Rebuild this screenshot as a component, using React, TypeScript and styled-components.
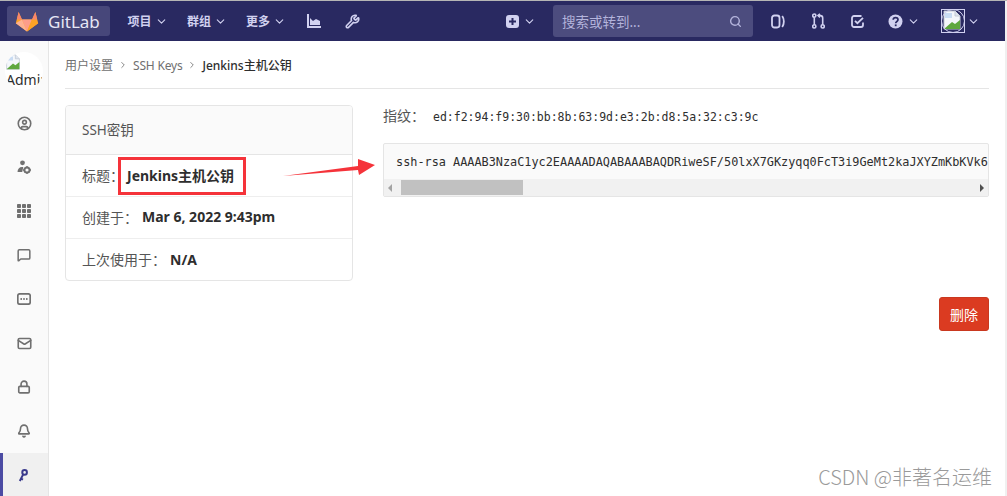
import styled, { createGlobalStyle } from 'styled-components';
import {
  ChevronDown,
  ChevronRight,
  Search,
  Wrench,
  CircleUser,
  MessageSquare,
  Mail,
  Lock,
  Bell,
} from 'lucide-react';

const GlobalStyle = createGlobalStyle`
  html, body { margin: 0; padding: 0; background: #fff; }
  body {
    font-family: "Noto Sans", "Noto Sans CJK SC", "Liberation Sans", sans-serif;
    font-size: 14px;
    color: #2e2e2e;
    overflow: hidden;
  }
`;

const Page = styled.div`
  position: relative;
  width: 1007px;
  height: 496px;
  overflow: hidden;
  border-top: 1px solid #b5b5b5;
  box-sizing: border-box;
`;

const Navbar = styled.header`
  height: 40px;
  background: #292961;
  display: flex;
  align-items: center;
  padding-left: 7px;
  color: #d1d1f0;
`;

const Brand = styled.div`
  width: 103px;
  height: 30px;
  box-sizing: border-box;
  background: #47477a;
  border-radius: 3px;
  display: flex;
  align-items: center;
  gap: 9px;
  padding-left: 8px;
  color: #e6e6f5;
  font-size: 17px;
  margin-right: 7px;
`;

const NavItem = styled.div<{ $w: number }>`
  width: ${(p) => p.$w}px;
  display: flex;
  align-items: center;
  justify-content: center;
  gap: 3px;
  font-size: 12px;
  font-weight: 700;
  color: #d1d1f0;
`;

const SearchBox = styled.div`
  width: 200px;
  height: 32px;
  box-sizing: border-box;
  background: #4c4c7e;
  border-radius: 3px;
  display: flex;
  align-items: center;
  justify-content: space-between;
  padding: 0 11px 0 9px;
  margin: 0 5px 0 12px;
  font-size: 13.5px;
  color: #b4b4dc;
`;

const NavIcon = styled.div<{ $w: number; $ml?: number }>`
  width: ${(p) => p.$w}px;
  margin-left: ${(p) => p.$ml ?? 0}px;
  display: flex;
  align-items: center;
  justify-content: center;
  gap: 4px;
  color: #d1d1f0;
`;

const Avatar = styled.div`
  position: relative;
  width: 24px;
  height: 24px;
  flex: none;
  margin-right: -2px;
  border: 1px solid #d1d1f0;
  box-sizing: border-box;
  display: flex;
  &::after {
    content: '';
    position: absolute;
    inset: -1px;
    border: 1px solid #d1d1f0;
    border-radius: 50%;
  }
`;

const Body = styled.div`
  display: flex;
  height: 455px;
`;

const Sidebar = styled.aside`
  width: 49px;
  flex: none;
  background: #fafafa;
  border-right: 1px solid #e5e5e5;
  box-sizing: border-box;
  display: flex;
  flex-direction: column;
  align-items: stretch;
`;

const SideHead = styled.div`
  height: 60px;
  flex: none;
  padding: 11px 0 0 5px;
  box-sizing: border-box;
`;

const SideAvatar = styled.div`
  width: 38px;
  height: 38px;
  border-radius: 50%;
  background: #fff;
  overflow: hidden;
  padding-top: 2px;
  box-sizing: border-box;
  font-size: 14px;
  line-height: 14px;
  color: #2e2e2e;
  white-space: nowrap;
  & > svg {
    display: block;
    margin-bottom: 3px;
  }
  & > div {
    padding-left: 1px;
  }
`;

const SideItem = styled.div<{ $active?: boolean }>`
  height: 44px;
  flex: none;
  display: flex;
  align-items: center;
  justify-content: center;
  color: ${(p) => (p.$active ? '#292961' : '#707070')};
  background: ${(p) => (p.$active ? '#f0f0f0' : 'transparent')};
  box-shadow: ${(p) => (p.$active ? 'inset 3px 0 0 #4b4ba3' : 'none')};
`;

const Main = styled.main`
  flex: 1;
  padding: 0 18px 0 16px;
  min-width: 0;
  display: flex;
  flex-direction: column;
`;

const Breadcrumb = styled.nav`
  height: 46px;
  padding-top: 1px;
  flex: none;
  border-bottom: 1px solid #e5e5e5;
  display: flex;
  align-items: center;
  gap: 5px;
  font-size: 12px;
  color: #707070;
`;

const Crumb = styled.span<{ $current?: boolean; $tight?: boolean }>`
  color: ${(p) => (p.$current ? '#2e2e2e' : '#707070')};
  font-weight: ${(p) => (p.$current ? 500 : 400)};
  letter-spacing: ${(p) => (p.$tight ? '-0.2px' : '0')};
`;

const Columns = styled.div`
  display: flex;
  gap: 30px;
  margin-top: 16px;
`;

const Card = styled.section`
  width: 288px;
  height: 176px;
  flex: none;
  box-sizing: border-box;
  border: 1px solid #e5e5e5;
  border-radius: 4px;
  overflow: hidden;
`;

const CardHeader = styled.div`
  height: 49px;
  padding: 0 0 3px 16px;
  box-sizing: border-box;
  background: #fafafa;
  border-bottom: 1px solid #e5e5e5;
  display: flex;
  align-items: center;
  font-size: 13.5px;
  color: #555;
`;

const CardRow = styled.div<{ $gap: number }>`
  height: 42px;
  box-sizing: border-box;
  padding: 0 0 2px 16px;
  border-bottom: 1px solid #eee;
  display: flex;
  align-items: center;
  gap: ${(p) => p.$gap}px;
  color: #555;
  &:last-child {
    border-bottom: none;
  }
  & > strong {
    color: #2e2e2e;
    font-weight: 700;
  }
`;

const Detail = styled.div`
  width: 606px;
  flex: none;
`;

const Fingerprint = styled.div`
  display: flex;
  align-items: center;
  gap: 8px;
  height: 22px;
  padding-bottom: 2px;
  box-sizing: border-box;
  color: #555;
  & > code {
    margin-top: 4px;
    font-family: "DejaVu Sans Mono", monospace;
    font-size: 11.5px;
    color: #2e2e2e;
  }
`;

const CodeBlock = styled.div`
  margin-top: 16px;
  height: 54px;
  box-sizing: border-box;
  border: 1px solid #e5e5e5;
  border-radius: 2px;
  background: #fafafa;
  overflow: hidden;
`;

const CodeText = styled.pre`
  margin: 0;
  height: 35px;
  padding: 0 0 0 12px;
  overflow: hidden;
  font-family: "DejaVu Sans Mono", monospace;
  font-size: 11.85px;
  line-height: 37px;
  color: #2e2e2e;
`;

const ScrollBar = styled.div`
  height: 17px;
  background: #f1f1f1;
  display: flex;
  align-items: center;
  justify-content: space-between;
  padding: 0 4px;
  position: relative;
`;

const Thumb = styled.div`
  position: absolute;
  left: 17px;
  top: 0;
  width: 122px;
  height: 15px;
  margin-top: 1px;
  background: #c1c1c1;
`;

const Arrow = styled.div<{ $dir: 'l' | 'r' }>`
  width: 0;
  height: 0;
  border-top: 4px solid transparent;
  border-bottom: 4px solid transparent;
  ${(p) => (p.$dir === 'l' ? 'border-right: 4px solid #a3a3a3;' : 'border-left: 4px solid #505050;')}
`;

const Actions = styled.div`
  display: flex;
  justify-content: flex-end;
  margin-top: 100px;
`;

const DeleteButton = styled.button`
  width: 50px;
  height: 34px;
  background: #db3b21;
  border: 1px solid #c9381f;
  border-radius: 3px;
  color: #fff;
  font-family: inherit;
  font-size: 14px;
  padding: 0;
`;

const RedBox = styled.div`
  position: absolute;
  left: 118px;
  top: 156px;
  width: 128px;
  height: 38px;
  box-sizing: border-box;
  border: 3px solid #f5333a;
`;

const RedArrow = styled.svg`
  position: absolute;
  left: 282px;
  top: 157px;
`;

const Watermark = styled.div`
  position: absolute;
  right: 15px;
  bottom: 5px;
  font-family: "Noto Sans CJK SC", "Liberation Sans", sans-serif;
  font-size: 20px;
  font-weight: 300;
  color: #9a9a9a;
`;

const EdgeStrip = styled.div`
  position: absolute;
  right: 0;
  top: 0;
  bottom: 0;
  width: 2px;
  background: #f0f0f0;
`;

const BrokenImage = ({ size = 20 }: { size?: number }) => (
  <svg width={size} height={size} viewBox="0 0 20 20" style={{ flex: 'none' }}>
    <path d="M2 1h11l5 5v13H2z" fill="#f4f7fb" stroke="#c3cad6" strokeWidth="1" />
    <path d="M13 1v5h5" fill="#dfe5ee" stroke="#c3cad6" />
    <path d="M2 19l8-7 3 2 5-4v9z" fill="#5fa83f" />
    <path d="M3 3h7v5H3z" fill="#c9dcf3" />
  </svg>
);

const Logo = () => (
  <svg width="24" height="23" viewBox="0 0 24 22">
    <path d="M12 21L0.8 12.8 3.6 1.5 7 9h10l3.4-7.5 2.8 11.3z" fill="#fca326" />
    <path d="M12 21L7 9h10z" fill="#fc9d8a" />
    <path d="M12 21L0.8 12.8 7 9z" fill="#fdb193" />
    <path d="M12 21l11.2-8.2L17 9z" fill="#fca326" />
    <path d="M3.6 1.5L7 9H1.9z" fill="#f8856d" />
    <path d="M20.4 1.5L17 9h5.1z" fill="#f8856d" />
  </svg>
);

const ChartIcon = () => (
  <svg width="14" height="14" viewBox="0 0 14 14" fill="currentColor">
    <path d="M0 0h2v12h12v2H0z" />
    <path d="M3 11V4l3 3 3-2 4 2v4z" />
  </svg>
);

const PlusBox = () => (
  <svg width="13" height="13" viewBox="0 0 13 13">
    <rect width="13" height="13" rx="3" fill="currentColor" />
    <path d="M6.5 3v7M3 6.5h7" stroke="#292961" strokeWidth="2" />
  </svg>
);

const IssuesIcon = () => (
  <svg width="14" height="15" viewBox="0 0 14 15" fill="none" stroke="currentColor" strokeWidth="1.8">
    <rect x="1" y="1.5" width="7.5" height="12" rx="2.4" />
    <path d="M11.2 2c2.2 3 2.2 8 0 11" />
  </svg>
);

const MergeIcon = () => (
  <svg width="13" height="16" viewBox="0 0 13 16" fill="none" stroke="currentColor" strokeWidth="1.6">
    <circle cx="2.3" cy="2.6" r="1.6" />
    <circle cx="2.3" cy="13.4" r="1.6" />
    <circle cx="10.7" cy="13.4" r="1.6" />
    <path d="M2.3 4.2v7.6M10.7 11.8V5c0-1.5-1-2.4-2.4-2.4H6.5" />
    <path d="M8 .8L6 2.6l2 1.8" />
  </svg>
);

const TodoIcon = () => (
  <svg width="13" height="13" viewBox="0 0 13 13" fill="none" stroke="currentColor" strokeWidth="1.8">
    <path d="M12 7.5V10a2 2 0 0 1-2 2H3a2 2 0 0 1-2-2V3a2 2 0 0 1 2-2h7.5" />
    <path d="M4 5.8l2.4 2.4L12 2.8" />
  </svg>
);

const HelpIcon = () => (
  <svg width="15" height="15" viewBox="0 0 15 15">
    <circle cx="7.5" cy="7.5" r="7" fill="currentColor" />
    <path d="M5.2 5.8c0-3 4.8-3 4.8 0 0 1.8-2.3 1.6-2.3 3.4" fill="none" stroke="#292961" strokeWidth="1.7" />
    <rect x="6.8" y="10.4" width="1.8" height="1.8" fill="#292961" />
  </svg>
);

const AdminIcon = () => (
  <svg width="14" height="14" viewBox="0 0 14 14" fill="currentColor">
    <circle cx="5.5" cy="2.8" r="2.4" />
    <path d="M0.5 12c0-3 1.8-5 4.5-5 .8 0 1.3.2 1.3.2L5.2 12z" />
    <circle cx="10" cy="10" r="2.6" fill="none" stroke="currentColor" strokeWidth="2" />
    <path d="M10 6v1.5M10 12.5V14M6 10h1.5M12.5 10H14" stroke="currentColor" strokeWidth="1.4" />
  </svg>
);

const GridIcon = () => (
  <svg width="14" height="14" viewBox="0 0 14 14" fill="currentColor">
    {[0, 5, 10].flatMap((y) =>
      [0, 5, 10].map((x) => <rect key={`${x}-${y}`} x={x} y={y} width="4" height="4" rx="0.8" />),
    )}
  </svg>
);

const CommentDots = () => (
  <svg width="14" height="12" viewBox="0 0 14 12" fill="none" stroke="currentColor" strokeWidth="1.7">
    <rect x="0.8" y="0.8" width="12.4" height="10.4" rx="2" />
    <path d="M3.5 6h1.4M6.3 6h1.4M9.1 6h1.4" strokeWidth="1.8" />
  </svg>
);

const KeyIcon = () => (
  <svg width="10" height="13" viewBox="0 0 10 13" fill="none" stroke="#3a3a8c" strokeWidth="2" style={{ marginRight: 3 }}>
    <circle cx="6.6" cy="3.4" r="2.3" />
    <path d="M5.2 5.4L1.8 12M3 9.6l2 1" />
  </svg>
);

export default function App() {
  return (
    <>
      <GlobalStyle />
      <Page>
        <Navbar>
          <Brand>
            <Logo />
            GitLab
          </Brand>
          <NavItem $w={61}>
            项目
            <ChevronDown size={13} />
          </NavItem>
          <NavItem $w={58}>
            群组
            <ChevronDown size={13} />
          </NavItem>
          <NavItem $w={60}>
            更多
            <ChevronDown size={13} />
          </NavItem>
          <NavIcon $w={36}>
            <ChartIcon />
          </NavIcon>
          <NavIcon $w={40}>
            <Wrench size={15} strokeWidth={2.6} />
          </NavIcon>
          <NavIcon $w={40} $ml={129}>
            <PlusBox />
            <ChevronDown size={13} />
          </NavIcon>
          <SearchBox>
            搜索或转到...
            <Search size={13} strokeWidth={2.6} />
          </SearchBox>
          <NavIcon $w={40}>
            <IssuesIcon />
          </NavIcon>
          <NavIcon $w={40}>
            <MergeIcon />
          </NavIcon>
          <NavIcon $w={38}>
            <TodoIcon />
          </NavIcon>
          <NavIcon $w={56}>
            <HelpIcon />
            <ChevronDown size={13} />
          </NavIcon>
          <NavIcon $w={56}>
            <Avatar>
              <BrokenImage />
            </Avatar>
            <ChevronDown size={13} />
          </NavIcon>
        </Navbar>
        <Body>
          <Sidebar>
            <SideHead>
              <SideAvatar>
                <BrokenImage size={16} />
                <div>Admin</div>
              </SideAvatar>
            </SideHead>
            <SideItem>
              <CircleUser size={15} strokeWidth={2.6} />
            </SideItem>
            <SideItem>
              <AdminIcon />
            </SideItem>
            <SideItem>
              <GridIcon />
            </SideItem>
            <SideItem>
              <MessageSquare size={14} strokeWidth={2.6} />
            </SideItem>
            <SideItem>
              <CommentDots />
            </SideItem>
            <SideItem>
              <Mail size={15} strokeWidth={2.6} />
            </SideItem>
            <SideItem>
              <Lock size={14} strokeWidth={2.8} />
            </SideItem>
            <SideItem>
              <Bell size={14} strokeWidth={2.8} />
            </SideItem>
            <SideItem $active>
              <KeyIcon />
            </SideItem>
          </Sidebar>
          <Main>
            <Breadcrumb>
              <Crumb>用户设置</Crumb>
              <ChevronRight size={10} />
              <Crumb $tight>SSH Keys</Crumb>
              <ChevronRight size={10} />
              <Crumb $current>Jenkins主机公钥</Crumb>
            </Breadcrumb>
            <Columns>
              <Card>
                <CardHeader>SSH密钥</CardHeader>
                <CardRow $gap={3}>
                  标题：<strong>Jenkins主机公钥</strong>
                </CardRow>
                <CardRow $gap={4}>
                  创建于：<strong>Mar 6, 2022 9:43pm</strong>
                </CardRow>
                <CardRow $gap={4}>
                  上次使用于：<strong>N/A</strong>
                </CardRow>
              </Card>
              <Detail>
                <Fingerprint>
                  指纹：
                  <code>ed:f2:94:f9:30:bb:8b:63:9d:e3:2b:d8:5a:32:c3:9c</code>
                </Fingerprint>
                <CodeBlock>
                  <CodeText>
                    ssh-rsa AAAAB3NzaC1yc2EAAAADAQABAAABAQDRiweSF/50lxX7GKzyqq0FcT3i9GeMt2kaJXYZmKbKVk6
                  </CodeText>
                  <ScrollBar>
                    <Arrow $dir="l" />
                    <Thumb />
                    <Arrow $dir="r" />
                  </ScrollBar>
                </CodeBlock>
                <Actions>
                  <DeleteButton>删除</DeleteButton>
                </Actions>
              </Detail>
            </Columns>
          </Main>
        </Body>
        <RedBox />
        <RedArrow width="94" height="20" viewBox="0 0 94 20">
          <path d="M1 18L76 8 76 1 93 7 77 17 76 12z" fill="#f5333a" />
        </RedArrow>
        <Watermark>CSDN @非著名运维</Watermark>
        <EdgeStrip />
      </Page>
    </>
  );
}
